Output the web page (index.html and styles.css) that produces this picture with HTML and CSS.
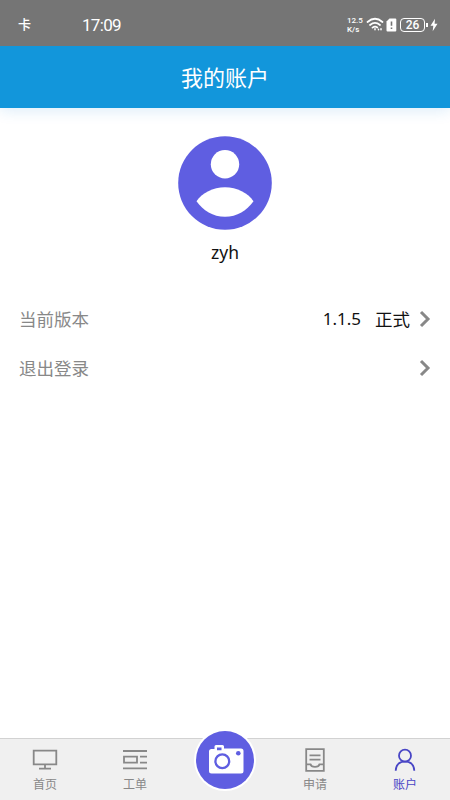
FILE: index.html
```html
<!DOCTYPE html>
<html lang="zh-CN">
<head>
<meta charset="utf-8">
<title>我的账户</title>
<link rel="stylesheet" href="styles.css">
</head>
<body>
<div class="app">
  <div class="status">
    <span class="carrier">卡</span>
    <span class="time">17:09</span>
    <div class="indicators">
      <div class="speed"><span>12.5</span><span>K/s</span></div>
      <svg class="wifi" width="18" height="15" viewBox="0 0 18 15" fill="none" stroke="#fff" stroke-width="1.7" stroke-linecap="round">
        <path d="M1.500 5Q9-1.500 16.500 5M4 8Q9 3.700 14 8M6.500 10.700Q9 8.700 11.300 10.500"/>
        <path d="M9 11.800v1M12.500 12.200v.6M15 11.800v1" stroke-width="1.500"/>
      </svg>
      <svg class="sim" width="11" height="14" viewBox="0 0 11 14"><path d="M3.500.5H9.300Q10.300.5 10.300 1.500V12.500Q10.300 13.500 9.300 13.500H1.500Q.5 13.500.5 12.500V3.500Z" fill="#fff"/><path d="M5.500 3.500v4.200M5.500 9.500v1.500" stroke="#757575" stroke-width="1.600"/></svg>
      <span class="battery">26</span>
      <span class="nub"></span>
      <svg class="bolt" width="8" height="14" viewBox="0 0 8 14"><path d="M5 .8.500 7.800H3.300L2.700 13.200 7.500 5.800H4.600Z" fill="#fff"/></svg>
    </div>
  </div>
  <header class="header">我的账户</header>
  <main class="content">
    <section class="profile">
      <svg width="94" height="94" viewBox="0 0 94 94"><circle cx="47" cy="47" r="46.800" fill="#5f5ee1"/><circle cx="47" cy="28.300" r="14.200" fill="#fff"/><path d="M18.500 65.200C24 57 35 51.300 47 51.300S70 57 75.500 65.200C69 74.500 59 80.700 47 80.700S25 74.500 18.500 65.200Z" fill="#fff"/></svg>
      <div class="name">zyh</div>
    </section>
    <div class="row">
      <span class="label">当前版本</span>
      <span class="version">1.1.5</span><span class="channel">正式</span>
      <svg class="chevron" width="12" height="18" viewBox="0 0 12 18"><path d="M2 2 9 9 2 16"/></svg>
    </div>
    <div class="row">
      <span class="label">退出登录</span>
      <svg class="chevron" width="12" height="18" viewBox="0 0 12 18"><path d="M2 2 9 9 2 16"/></svg>
    </div>
  </main>
  <nav class="tabs">
    <div class="tab">
      <svg width="26" height="26" viewBox="0 0 26 26"><path d="M1.700 3.700H24.300V17.300H1.700ZM13 17.300V21.500M7 21.700H19"/></svg>
      <span>首页</span>
    </div>
    <div class="tab">
      <svg width="26" height="26" viewBox="0 0 26 26"><path d="M1 4H25M1 21.300H25M2 9.600H15V15.700H2ZM18 9.600H25M18 15.700H25"/></svg>
      <span>工单</span>
    </div>
    <div class="tab">
      <div class="camera">
        <svg width="58" height="58" viewBox="0 0 58 58"><path d="M15.500 18H18.500V15.500Q18.500 14 20 14H26.500Q28 14 28 15.500V17.500H45Q47.500 17.500 47.500 20V40Q47.500 42.500 45 42.500H15.500Q13 42.500 13 40V20.500Q13 18 15.500 18Z" fill="#fff"/><path d="M21 16.600H25.500V19.300H21Z" fill="#5f5ee1"/><circle cx="26.300" cy="30.200" r="6.900" fill="none" stroke="#5f5ee1" stroke-width="2.300"/><circle cx="42.300" cy="22.300" r="2.300" fill="#5f5ee1"/></svg>
      </div>
    </div>
    <div class="tab">
      <svg width="26" height="26" viewBox="0 0 26 26"><path d="M4.200 2.200H21.800V23.800H4.200ZM7.500 8.300H18.500M7.500 12.700H18.500M4.200 17.300H8.500C9.300 20.800 16.700 20.800 17.500 17.300H21.800"/></svg>
      <span>申请</span>
    </div>
    <div class="tab active">
      <svg width="26" height="26" viewBox="0 0 26 26"><circle cx="13" cy="8.700" r="6"/><path d="M3.700 23.800C4 17.800 7.500 14.700 13 14.700S22 17.800 22.300 23.800"/></svg>
      <span>账户</span>
    </div>
  </nav>
</div>
</body>
</html>
```
FILE: styles.css
```css
* { box-sizing: border-box; }
body { margin: 0; font-family: "Noto Sans", "Noto Sans CJK SC", sans-serif; }
svg { display: block; flex: none; }
.app { width: 450px; height: 800px; display: flex; flex-direction: column; background: #fff; overflow: hidden; }
.status { height: 46px; flex: none; background: #757575; color: #fff; display: flex; align-items: center; padding: 3px 12px 0 18px; position: relative; z-index: 1; }
.carrier { width: 64px; font-size: 13px; font-weight: 500; line-height: 18px; padding-bottom: 1px; }
.time { font: 400 17px Roboto, sans-serif; letter-spacing: -0.7px; }
.indicators { margin-left: auto; display: flex; align-items: center; }
.speed { display: flex; flex-direction: column; font: 500 8px/9px Roboto, sans-serif; margin-right: 2px; width: 17px; }
.wifi { margin-right: 2px; }
.sim { margin-right: 3px; }
.battery { width: 25px; height: 14px; border: 1.500px solid #fff; border-radius: 4px; font: 500 12px/12px Roboto, sans-serif; text-align: center; }
.nub { width: 2px; height: 4px; background: #fff; margin: 0 2px 0 1px; }
.header { height: 62px; flex: none; background: #1296db; color: #fff; font: 400 22px/60px "Noto Sans CJK SC", sans-serif; text-align: center; position: relative; box-shadow: 0 2px 14px rgba(18, 130, 219, 0.16); }
.content { flex: 1; }
.profile { display: flex; flex-direction: column; align-items: center; padding-top: 28px; height: 186px; }
.name { font-size: 17.500px; line-height: 24px; margin-top: 10px; color: #111; }
.row { height: 49px; display: flex; align-items: center; padding: 0 19px 0 19px; font-size: 17.500px; line-height: 26px; color: #111; }
.label { color: #888; margin-right: auto; }
.version { margin-right: 14px; font-size: 17px; }
.channel { margin-right: 9px; }
.chevron { fill: none; stroke: #888; stroke-width: 3; }
.tabs { height: 62px; flex: none; display: flex; background: #f0f0f0; border-top: 1px solid #d2d2d2; position: relative; }
.tab { flex: 1; display: flex; flex-direction: column; align-items: center; padding-top: 8px; color: #888; font-size: 12px; line-height: 18px; }
.tab > svg { fill: none; stroke: currentColor; stroke-width: 1.800; }
.tab span { margin-top: 3px; }
.active { color: #4845c5; }
.camera { width: 62px; height: 62px; padding: 2px; border-radius: 50%; background: #fff; margin-top: -18.500px; }
.camera svg { border-radius: 50%; background: #5f5ee1; }
```
